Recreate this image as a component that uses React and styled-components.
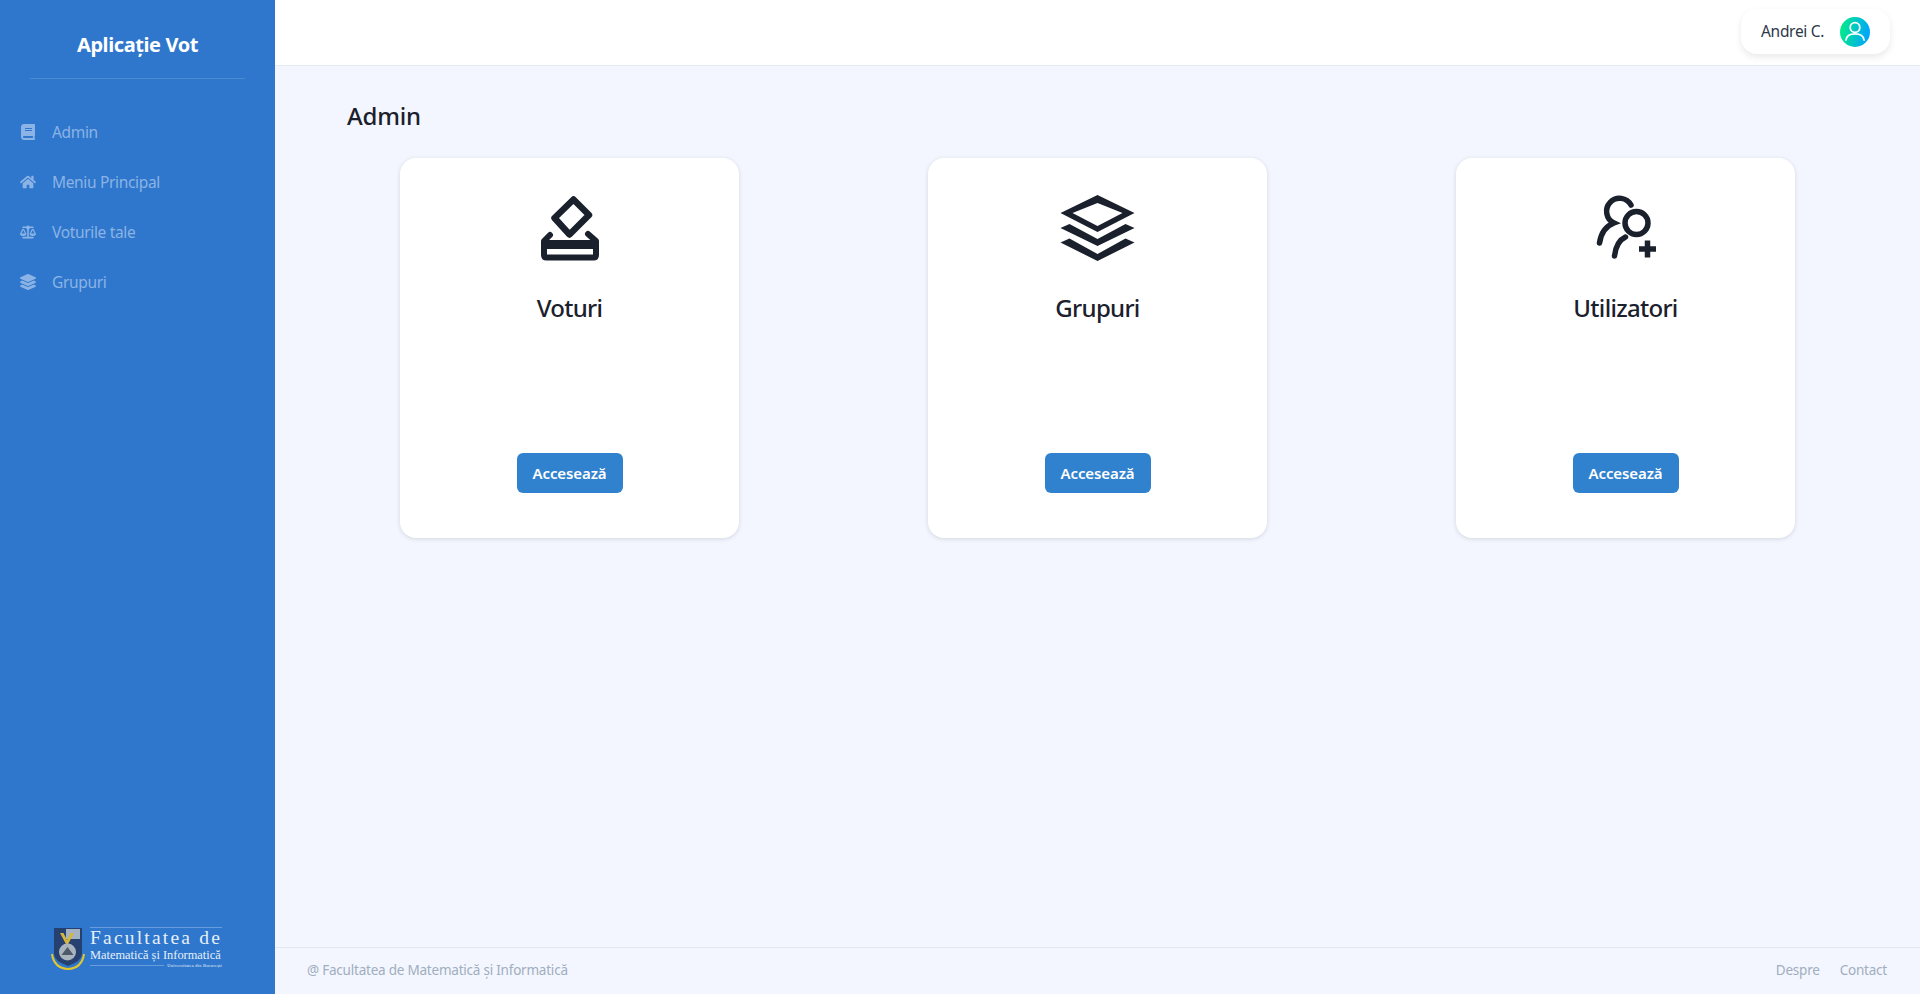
import styled, { createGlobalStyle } from "styled-components";
import { FaBook, FaHome, FaBalanceScale, FaLayerGroup } from "react-icons/fa";

const GlobalStyle = createGlobalStyle`
  html, body {
    margin: 0;
    padding: 0;
    height: 100%;
  }
  body {
    font-family: "Noto Sans", "Open Sans", "Liberation Sans", sans-serif;
    color: #1a202c;
    background: #f3f6fe;
  }
  * {
    box-sizing: border-box;
  }
`;

const Page = styled.div`
  display: flex;
  width: 1920px;
  height: 994px;
  overflow: hidden;
`;

const Sidebar = styled.aside`
  width: 275px;
  flex: none;
  display: flex;
  flex-direction: column;
  background: #2f77cc;
`;

const Brand = styled.div`
  margin: 0 30px;
  height: 79px;
  padding-top: 29px;
  text-align: center;
  font-size: 20px;
  line-height: 31px;
  font-weight: 700;
  letter-spacing: -0.4px;
  color: #fff;
  border-bottom: 1px solid rgba(255, 255, 255, 0.14);
`;

const Nav = styled.nav`
  display: flex;
  flex-direction: column;
  gap: 26px;
  padding: 41px 0 0 20px;
`;

const NavItem = styled.a`
  display: flex;
  align-items: center;
  gap: 16px;
  height: 24px;
  font-size: 15.5px;
  letter-spacing: -0.34px;
  color: #8bb3e5;
  svg {
    width: 16px;
    height: 16px;
    flex: none;
  }
`;

const LogoBox = styled.div`
  margin-top: auto;
  height: 84px;
  padding: 17px 0 0 51px;
  display: flex;
  gap: 5px;
  color: #e6eff9;
`;

const LogoText = styled.div`
  display: flex;
  flex-direction: column;
  width: 132px;
  border-top: 1px solid rgba(255, 255, 255, 0.28);
  font-family: "Liberation Serif", serif;
`;

const LogoTitle = styled.div`
  font-size: 19.5px;
  line-height: 20px;
  letter-spacing: 2.2px;
  white-space: nowrap;
`;

const LogoSub = styled.div`
  font-size: 12.4px;
  line-height: 15px;
  white-space: nowrap;
`;

const LogoFoot = styled.div`
  display: flex;
  align-items: center;
  gap: 3px;
`;

const LogoRule = styled.span`
  flex: 1;
  height: 1px;
  background: rgba(255, 255, 255, 0.28);
`;

const LogoTiny = styled.span`
  font-size: 4.5px;
  line-height: 5px;
  letter-spacing: 0.2px;
  white-space: nowrap;
`;

const Main = styled.div`
  flex: 1;
  display: flex;
  flex-direction: column;
  min-width: 0;
`;

const Header = styled.header`
  height: 66px;
  flex: none;
  display: flex;
  justify-content: flex-end;
  padding: 9px 30px 0 0;
  background: #fff;
  border-bottom: 1px solid #e6ebf3;
`;

const UserChip = styled.div`
  width: 149px;
  height: 45px;
  display: flex;
  align-items: center;
  justify-content: space-between;
  padding: 0 20px;
  background: #fff;
  border-radius: 16px;
  box-shadow: 0 3px 7px rgba(0, 0, 0, 0.09);
  font-size: 15.5px;
  letter-spacing: -0.3px;
  color: #2d3748;
`;

const UserName = styled.span`
  position: relative;
  top: -1px;
`;

const Avatar = styled.span`
  width: 30px;
  height: 30px;
  flex: none;
  display: flex;
  align-items: center;
  justify-content: center;
  border-radius: 50%;
  background: linear-gradient(100deg, #00ea8a 8%, #00a4ff 92%);
`;

const Content = styled.main`
  flex: 1;
  padding: 34px 0 0 72px;
`;

const Title = styled.h1`
  margin: 0 0 26px;
  font-size: 24px;
  line-height: 32px;
  font-weight: 500;
  letter-spacing: -0.2px;
  color: #1a202c;
`;

const Cards = styled.div`
  display: flex;
  gap: 189px;
  padding-left: 53px;
`;

const Card = styled.section`
  width: 339px;
  height: 380px;
  display: flex;
  flex-direction: column;
  align-items: center;
  padding-top: 32px;
  background: #fff;
  border-radius: 16px;
  box-shadow: 0 1px 4px rgba(45, 55, 72, 0.16);
`;

const CardIcon = styled.div`
  height: 72px;
  display: flex;
  justify-content: center;
  color: #1a202c;
`;

const CardTitle = styled.h2`
  margin: 30px 0 0;
  font-size: 24px;
  line-height: 32px;
  font-weight: 500;
  letter-spacing: -0.7px;
  color: #1a202c;
`;

const Button = styled.button`
  margin-top: auto;
  margin-bottom: 45px;
  width: 106px;
  height: 40px;
  border: 0;
  border-radius: 6px;
  background: #3182ce;
  color: #fff;
  font-family: inherit;
  font-size: 15px;
  font-weight: 600;
  letter-spacing: -0.1px;
`;

const Footer = styled.footer`
  height: 47px;
  flex: none;
  display: flex;
  align-items: center;
  justify-content: space-between;
  padding: 0 33px 2px 32px;
  border-top: 1px solid #e2e8f0;
  font-size: 13.5px;
  letter-spacing: -0.22px;
  color: #a0aec0;
`;

const FooterLinks = styled.div`
  display: flex;
  gap: 20px;
`;

function VoteIcon() {
  return (
    <svg width="72" height="72" viewBox="0 0 72 72" fill="none" stroke="currentColor" strokeWidth="6.500" strokeLinejoin="round" strokeLinecap="round">
      <path d="M39.500 9.500 L55 25 L35.500 44.500 L20.500 28 Z" />
      <path d="M16 45 L10 51 V65 Q10 67.500 12.500 67.500 H59.500 Q62 67.500 62 65 V51 L54 44" strokeWidth="6" />
      <path d="M10 54.500 H62" strokeWidth="9" strokeLinecap="butt" />
    </svg>
  );
}

function LayersIcon() {
  return (
    <svg width="79" height="72" viewBox="0 0 79 72" fill="currentColor">
      <path fillRule="evenodd" d="M39.500 5 L76.500 23 L39.500 42 L2.500 23 Z M39.500 13 L14.500 23 L39.500 36 L64.500 23 Z" />
      <path d="M2.500 38 L11.500 34 L39.500 49 L67.500 34 L76.500 38 L39.500 56 Z" />
      <path d="M2.500 52.500 L11.500 48.500 L39.500 64 L67.500 48.500 L76.500 52.500 L39.500 71 Z" />
    </svg>
  );
}

function UserPlusIcon() {
  return (
    <svg width="72" height="72" viewBox="0 0 72 72" fill="none" stroke="currentColor" strokeWidth="5.500" strokeLinecap="round">
      <path d="M41 15 A13 13 0 1 0 24 33 C16 36 11 43 9.500 53" />
      <circle cx="46.500" cy="33" r="11.500" />
      <path d="M35.500 47 C29 50 25.500 57 24.500 66" />
      <path d="M57.500 50.500 V67.500 M49 59 H66" strokeLinecap="butt" />
    </svg>
  );
}

function UserGlyph() {
  return (
    <svg width="22" height="22" viewBox="0 0 22 22" fill="none" stroke="#fff" strokeWidth="1.800" strokeLinecap="round">
      <circle cx="11" cy="6.500" r="4.800" />
      <path d="M2 19 C2.500 14.500 6 12.800 11 12.800 C16 12.800 19.500 14.500 20 19" />
    </svg>
  );
}

function Crest() {
  return (
    <svg width="34" height="43" viewBox="0 0 34 43">
      <path d="M3 1 H31 V27 Q31 34 17 39 Q3 34 3 27 Z" fill="#26406f" />
      <rect x="15" y="2" width="14" height="10" fill="#a4b3c4" />
      <path d="M9 6 L16 19 L23 6 H19.500 L16 13 L12.500 6 Z" fill="#d7b73a" />
      <circle cx="16.500" cy="25" r="8.500" fill="#a9b4bd" />
      <path d="M10.500 28 L16.500 20 L22.500 28 Z" fill="#4d5a68" />
      <path d="M1 27 Q3 41 17 42 Q31 41 33 27" fill="none" stroke="#e3c62c" strokeWidth="2" />
    </svg>
  );
}

const navItems = [
  { label: "Admin", icon: <FaBook /> },
  { label: "Meniu Principal", icon: <FaHome /> },
  { label: "Voturile tale", icon: <FaBalanceScale /> },
  { label: "Grupuri", icon: <FaLayerGroup /> },
];

const cards = [
  { title: "Voturi", icon: <VoteIcon /> },
  { title: "Grupuri", icon: <LayersIcon /> },
  { title: "Utilizatori", icon: <UserPlusIcon /> },
];

function App() {
  return (
    <Page>
      <GlobalStyle />
      <Sidebar>
        <Brand>Aplicație Vot</Brand>
        <Nav>
          {navItems.map((item) => (
            <NavItem key={item.label}>
              {item.icon}
              {item.label}
            </NavItem>
          ))}
        </Nav>
        <LogoBox>
          <Crest />
          <LogoText>
            <LogoTitle>Facultatea de</LogoTitle>
            <LogoSub>Matematică și Informatică</LogoSub>
            <LogoFoot>
              <LogoRule />
              <LogoTiny>Universitatea din București</LogoTiny>
            </LogoFoot>
          </LogoText>
        </LogoBox>
      </Sidebar>
      <Main>
        <Header>
          <UserChip>
            <UserName>Andrei C.</UserName>
            <Avatar>
              <UserGlyph />
            </Avatar>
          </UserChip>
        </Header>
        <Content>
          <Title>Admin</Title>
          <Cards>
            {cards.map((card) => (
              <Card key={card.title}>
                <CardIcon>{card.icon}</CardIcon>
                <CardTitle>{card.title}</CardTitle>
                <Button>Accesează</Button>
              </Card>
            ))}
          </Cards>
        </Content>
        <Footer>
          <span>@ Facultatea de Matematică și Informatică</span>
          <FooterLinks>
            <span>Despre</span>
            <span>Contact</span>
          </FooterLinks>
        </Footer>
      </Main>
    </Page>
  );
}

export default App;
